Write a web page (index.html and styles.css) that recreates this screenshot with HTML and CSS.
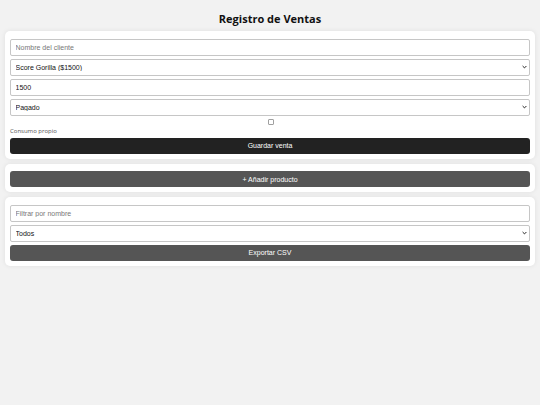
FILE: index.html
```html
<!DOCTYPE html>
<html lang="es">
<head>
<meta charset="utf-8">
<title>Registro de Ventas</title>
<link rel="stylesheet" href="styles.css">
</head>
<body>
<h1 class="title">Registro de Ventas</h1>
<div class="card">
  <input class="field" type="text" placeholder="Nombre del cliente">
  <div class="select-wrap">
    <select class="field">
      <option>Score Gorilla ($1500)</option>
    </select>
    <svg class="chev" width="5" height="4" viewBox="0 0 5 4"><path d="M0.6 1 L2.5 2.9 L4.4 1" fill="none" stroke="#222" stroke-width="1"/></svg>
  </div>
  <input class="field" type="number" value="1500">
  <div class="select-wrap">
    <select class="field">
      <option>Pagado</option>
    </select>
    <svg class="chev" width="5" height="4" viewBox="0 0 5 4"><path d="M0.6 1 L2.5 2.9 L4.4 1" fill="none" stroke="#222" stroke-width="1"/></svg>
  </div>
  <input class="check" type="checkbox">
  <label class="label">Consumo propio</label>
  <button class="btn btn-dark">Guardar venta</button>
</div>
<div class="card">
  <button class="btn btn-gray">+ Añadir producto</button>
</div>
<div class="card">
  <input class="field" type="text" placeholder="Filtrar por nombre">
  <div class="select-wrap">
    <select class="field">
      <option>Todos</option>
    </select>
    <svg class="chev" width="5" height="4" viewBox="0 0 5 4"><path d="M0.6 1 L2.5 2.9 L4.4 1" fill="none" stroke="#222" stroke-width="1"/></svg>
  </div>
  <button class="btn btn-gray">Exportar CSV</button>
</div>
</body>
</html>
```

FILE: styles.css
```css
html, body {
  margin: 0;
  background: #f2f2f2;
}
body {
  padding: 5px;
  font-family: "Open Sans", "Noto Sans", sans-serif;
}
.title {
  margin: 5.5px 0;
  font-size: 11px;
  line-height: 15px;
  font-weight: 700;
  text-align: center;
  color: #111;
}
.card {
  background: #fff;
  border-radius: 5px;
  padding: 5px;
  margin-bottom: 5px;
  box-shadow: 0 0 5px rgba(0, 0, 0, 0.08);
}
.field {
  display: block;
  box-sizing: border-box;
  width: 100%;
  height: 17.5px;
  margin: 2.5px 0;
  padding: 0 4.5px;
  border: 1px solid #c6c6c6;
  border-radius: 2px;
  background: #fff;
  font-family: "Liberation Sans", Arial, sans-serif;
  font-size: 7px;
  color: #111;
  outline: none;
}
select.field {
  -webkit-appearance: none;
  appearance: none;
}
.field::placeholder {
  color: #777;
}
.select-wrap {
  position: relative;
}
.chev {
  position: absolute;
  right: 3px;
  top: 50%;
  margin-top: -2px;
  pointer-events: none;
}
.check {
  -webkit-appearance: none;
  appearance: none;
  display: block;
  box-sizing: border-box;
  width: 6px;
  height: 6px;
  margin: 2.5px auto 2.5px;
  border: 1px solid #a0a0a0;
  border-radius: 1px;
  background: #fff;
  position: relative;
  left: 1px;
}
.label {
  display: block;
  font-size: 6px;
  line-height: 8px;
  color: #555;
}
.btn {
  display: block;
  width: 100%;
  height: 16px;
  margin: 2.5px 0 0;
  padding: 0;
  border: none;
  border-radius: 3px;
  color: #fff;
  font-family: "Liberation Sans", Arial, sans-serif;
  font-size: 7px;
}
.btn-dark {
  background: #222;
}
.btn-gray {
  background: #555;
}
```
